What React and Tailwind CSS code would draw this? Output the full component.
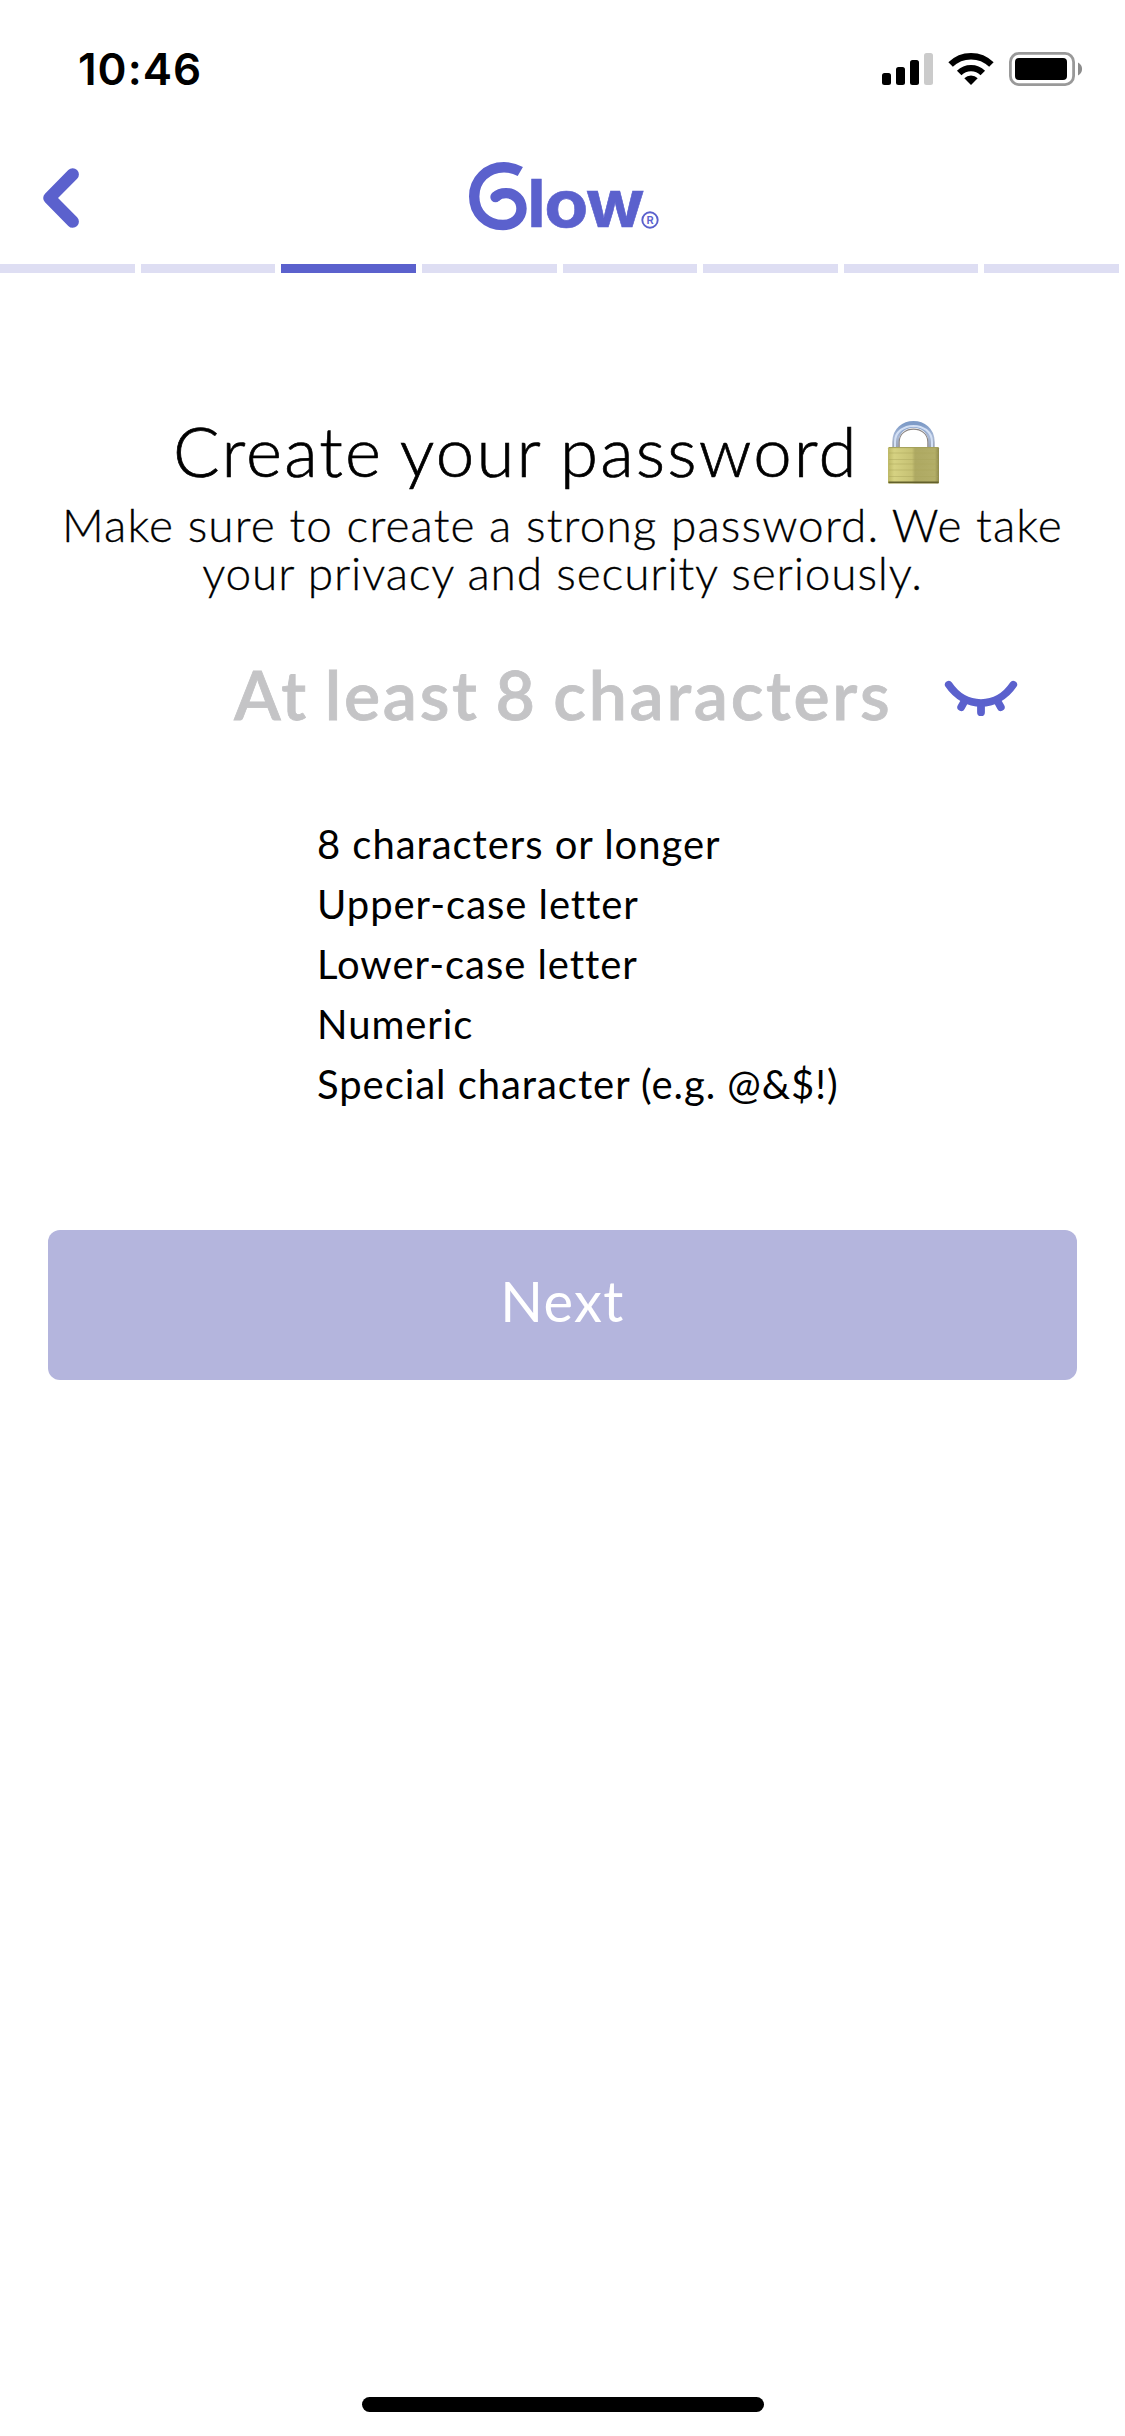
import React from 'react';

const BRAND = '#5b61cd';
const STEPS = 8;
const CURRENT_STEP = 2;

const requirements = [
  '8 characters or longer',
  'Upper-case letter',
  'Lower-case letter',
  'Numeric',
  'Special character (e.g. @&$!)',
];

function StatusIcons() {
  return (
    <svg width="201" height="36" viewBox="882 51 201 36">
      <rect x="882" y="73" width="9" height="12" rx="2.5" />
      <rect x="896" y="67" width="9" height="18" rx="2.5" />
      <rect x="910" y="60" width="9" height="25" rx="2.5" />
      <rect x="924" y="53" width="9" height="32" rx="2.5" fill="#cbcbcb" />
      <path d="M971 85 L964.3 78.3 A9.5 9.5 0 0 1 977.7 78.3 Z" />
      <path d="M959.2 73 A16.7 16.7 0 0 1 982.8 73" fill="none" stroke="#000" strokeWidth="6.4" />
      <path d="M950.6 64.6 A29 29 0 0 1 991.4 64.6" fill="none" stroke="#000" strokeWidth="6.4" />
      <rect x="1010.4" y="53.4" width="63.2" height="31.2" rx="8.5" fill="none" stroke="#999" strokeWidth="2.8" />
      <rect x="1015" y="58" width="52" height="22" rx="4" />
      <path d="M1078 62.5 C1083.4 65 1083.4 73 1078 75.5 Z" fill="#8c8c8c" />
    </svg>
  );
}

function Logo() {
  return (
    <svg width="200" height="80" viewBox="462 155 200 80" fill={BRAND} className="overflow-visible">
      <path
        d="M519.3 171.6 C514 168.5 508.5 167.2 503 167.2 C486 167.2 473.2 180 473.2 196.5 C473.2 213 485.5 225 502 225 C512.5 225 520.5 218 520.5 208.5 C520.5 199.5 513.5 193.1 505 193.1 C500.5 193.1 497 194.5 494.5 197"
        fill="none"
        stroke={BRAND}
        strokeWidth="10.4"
      />
      <circle cx="494.5" cy="197" r="5.2" />
      <g fontFamily="Inter" fontWeight="700" fontSize="66" stroke={BRAND} strokeWidth="0.6">
        <text x="526.6" y="227.3">l</text>
        <text transform="translate(543.2 227.3) scale(1.09 1)">o</text>
        <text transform="translate(585 227.3) scale(1.04 1)">w</text>
      </g>
      <circle cx="649" cy="220" r="7.7" fill="none" stroke={BRAND} strokeWidth="1.9" />
      <text x="649.2" y="224" textAnchor="middle" fontFamily="Inter" fontWeight="600" fontSize="11">R</text>
    </svg>
  );
}

function Lock() {
  return (
    <svg width="53" height="64" viewBox="887 420 53 64" className="shrink-0">
      <defs>
        <linearGradient id="steel" x1="0" y1="0" x2="0" y2="1">
          <stop offset="0" stopColor="#7f9cc8" />
          <stop offset="0.5" stopColor="#a9b9d6" />
          <stop offset="1" stopColor="#98a0b0" />
        </linearGradient>
        <linearGradient id="brass" x1="0" y1="0" x2="1" y2="0">
          <stop offset="0" stopColor="#bdb866" />
          <stop offset="0.12" stopColor="#d6d282" />
          <stop offset="0.47" stopColor="#c6c174" />
          <stop offset="0.53" stopColor="#aea963" />
          <stop offset="0.92" stopColor="#b3ae68" />
          <stop offset="1" stopColor="#8f8a4c" />
        </linearGradient>
      </defs>
      <path d="M895.6 449 V442 C895.6 418.5 931.4 418.5 931.4 442 V449" fill="none" stroke="url(#steel)" strokeWidth="6.6" />
      <path d="M895 449 V442 C895 420.5 932 420.5 932 442 V449" fill="none" stroke="#d3e0f5" strokeWidth="2" />
      <path d="M899.2 448 V442 C899.2 424.8 927.8 424.8 927.8 442 V448" fill="none" stroke="#8a8482" strokeWidth="1.1" />
      <rect x="888" y="447" width="51" height="36.5" rx="1.2" fill="url(#brass)" />
      <path d="M889 447.6 H938" stroke="#a39f5a" strokeWidth="1" />
      <path d="M889 453 H938 M889 459.5 H938 M889 464 H938 M889 470 H938 M889 476.5 H938" stroke="#a8a45a" strokeOpacity="0.45" strokeWidth="1" />
      <path d="M888.5 482.4 H938.5" stroke="#63602c" strokeWidth="1.9" />
    </svg>
  );
}

function ClosedEye() {
  return (
    <svg width="74" height="38" viewBox="944 679 74 38" fill="none" stroke={BRAND} strokeLinecap="round">
      <path d="M948.7 684.7 C965 709 997 709 1013.3 684.7" strokeWidth="7.6" />
      <path d="M963.5 703 L961.2 707.2 M981 704 V712.2 M998.5 703 L1000.8 707.2" strokeWidth="7.8" />
    </svg>
  );
}

export default function App() {
  return (
    <main className="flex h-[2436px] w-[1125px] flex-col bg-white font-[Lato,sans-serif] text-black">
      <header>
        <div className="flex h-[138px] items-start justify-between pl-[78px] pr-[42px] pt-[51px]">
          <time className="-mt-[9px] font-[Inter,sans-serif] text-[44px] font-semibold leading-[54px] tracking-[1px]">10:46</time>
          <StatusIcons />
        </div>
        <div className="grid h-[126px] grid-cols-[1fr_200px_1fr] items-start pt-[17px]">
          <button aria-label="Back" className="ml-[42px] mt-[12px] w-[38px]">
            <svg width="38" height="62" viewBox="42 167 38 62" fill="none" stroke={BRAND} strokeWidth="12.4" strokeLinecap="round" strokeLinejoin="round">
              <path d="M72.7 174.4 L49.4 198 L72.7 221.6" />
            </svg>
          </button>
          <Logo />
        </div>
        <div className="grid h-[9px] grid-cols-8 gap-[6px] pr-[6px]">
          {Array.from({ length: STEPS }, (_, step) => (
            <div key={step} className={step === CURRENT_STEP ? 'bg-[#5b61cd]' : 'bg-[#dedef3]'} />
          ))}
        </div>
      </header>

      <section className="mt-[138px] flex flex-col items-center">
        <h1 className="flex h-20 w-full items-start pl-[173px] text-[69px] font-light leading-[80px] tracking-[2.15px] [word-spacing:-2.5px] [-webkit-text-stroke:0.7px_black]">
          <span className="w-[714px] whitespace-nowrap">Create your password</span>
          <span className="mt-[9px]"><Lock /></span>
        </h1>
        <p className="mt-[10px] whitespace-nowrap text-center text-[46px] font-light leading-[48px] [-webkit-text-stroke:0.3px_black]">
          <span className="block tracking-[1.1px]">Make sure to create a strong password. We take</span>
          <span className="block tracking-[0.86px]">your privacy and security seriously.</span>
        </p>
      </section>

      <div className="mt-[57px] flex h-20 items-start pl-[234px]">
        <span className="w-[710px] whitespace-nowrap text-[68px] font-semibold leading-[80px] tracking-[2.75px] text-[#c4c4c6] [word-spacing:-4px] [-webkit-text-stroke:0.8px_#c4c4c6]">At least 8 characters</span>
        <span className="mt-[25px]"><ClosedEye /></span>
      </div>

      <ul className="mt-[80px] pl-[317px] text-[40px] leading-[60px] tracking-[0.95px]">
        {requirements.map((label) => (
          <li key={label}>{label}</li>
        ))}
      </ul>

      <button className="mx-12 mt-[116px] flex h-[150px] items-center justify-center rounded-xl bg-[#b4b5dd] pb-2 text-[56px] leading-[80px] tracking-[1.3px] text-white">
        Next
      </button>

      <div className="mx-auto mb-6 mt-auto h-[15px] w-[402px] rounded-full bg-black" />
    </main>
  );
}
